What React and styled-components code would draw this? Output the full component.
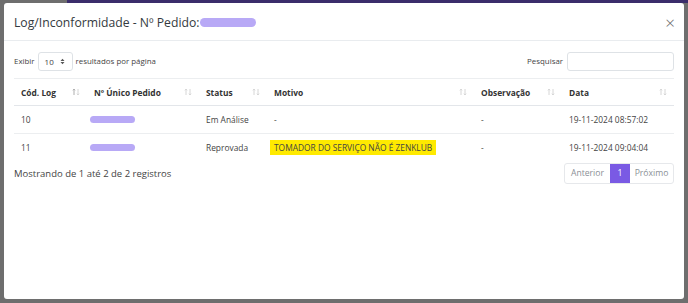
import React from "react";
import styled, { createGlobalStyle } from "styled-components";

const GlobalStyle = createGlobalStyle`
  html, body {
    margin: 0;
    padding: 0;
    height: 303px;
    overflow: hidden;
    background: #6e6e6e;
    font-family: "Open Sans", "Noto Sans", sans-serif;
  }
`;

const Backdrop = styled.div`
  width: 688px;
  height: 303px;
  display: flex;
  flex-direction: column;
  background: #6e6e6e;
`;

const TopStrip = styled.div`
  height: 3px;
  margin-left: 67px;
  background: #3b2d6b;
  flex-shrink: 0;
`;

const Modal = styled.div`
  margin: 0 4px;
  height: 296px;
  background: #fff;
  border-radius: 3px;
  display: flex;
  flex-direction: column;
`;

const Header = styled.div`
  height: 38px;
  border-bottom: 1px solid #e9ecef;
  display: flex;
  align-items: center;
  justify-content: space-between;
  padding: 2px 9px 0 10px;
  box-sizing: border-box;
`;

const Title = styled.h5`
  margin: 0;
  font-size: 12.2px;
  font-weight: 400;
  color: #343a40;
  display: flex;
  align-items: center;
`;

const Blur = styled.span`
  display: inline-block;
  width: ${(p) => p.$w}px;
  height: ${(p) => p.$h}px;
  border-radius: 5px;
  background: #b8a9f6;
  margin-left: ${(p) => p.$ml || 0}px;
`;

const Close = styled.span`
  font-size: 17px;
  font-weight: 300;
  color: #666;
  line-height: 1;
`;

const Body = styled.div`
  padding: 10px 10px 0 10px;
  display: flex;
  flex-direction: column;
`;

const Controls = styled.div`
  display: flex;
  justify-content: space-between;
  align-items: center;
  height: 20px;
  font-size: 7.9px;
  color: #444;
  margin-bottom: 7px;
`;

const Group = styled.label`
  display: flex;
  align-items: center;
  gap: ${(p) => p.$gap || 3}px;
`;

const SelectBox = styled.span`
  width: 35px;
  height: 19px;
  border: 1px solid #dee2e6;
  border-radius: 3px;
  box-sizing: border-box;
  display: flex;
  align-items: center;
  justify-content: space-between;
  padding: 0 7px 0 6px;
  font-size: 8px;
  color: #444;
`;

const SearchBox = styled.span`
  width: 107px;
  height: 19px;
  border: 1px solid #dee2e6;
  border-radius: 3px;
  box-sizing: border-box;
`;

const Table = styled.table`
  width: 660px;
  border-collapse: collapse;
  border-top: 1px solid #eceef0;
  font-size: 8.4px;
  color: #444;
`;

const Th = styled.th`
  width: ${(p) => p.$w}px;
  height: 27px;
  text-align: left;
  font-weight: 700;
  color: #333;
  padding: 0 7px;
  border-bottom: 1.5px solid #e3e6ea;
  box-sizing: border-box;
`;

const ThInner = styled.div`
  display: flex;
  align-items: center;
  justify-content: space-between;
`;

const Td = styled.td`
  height: 28px;
  padding: 0 7px;
  border-bottom: ${(p) => (p.$last ? "none" : "1px solid #eceef0")};
  box-sizing: border-box;
  white-space: nowrap;
`;

const Mark = styled.span`
  background: #ffea00;
  padding: 2px 4px;
  margin-left: -4px;
  color: #444;
`;

const Footer = styled.div`
  display: flex;
  justify-content: space-between;
  align-items: flex-start;
  font-size: 9.5px;
  color: #444;
`;

const Info = styled.span`
  margin-top: 5px;
`;

const Pager = styled.div`
  display: flex;
  border: 1px solid #e6e8eb;
  border-radius: 3px;
  height: 21px;
  margin-top: 1px;
  box-sizing: border-box;
`;

const PageBtn = styled.span`
  display: flex;
  align-items: center;
  justify-content: center;
  width: ${(p) => p.$w}px;
  background: ${(p) => (p.$active ? "#7a5ae4" : "transparent")};
  color: ${(p) => (p.$active ? "#fff" : "#8a8f96")};
  font-size: 8.6px;
`;

const SortIcon = ({ active }) => (
  <svg width="8" height="8" viewBox="0 0 8 8">
    <g strokeWidth="0.8" fill="none">
      <path d="M2 7V1.2M0.9 2.3L2 1.1L3.1 2.3" stroke={active ? "#999" : "#ccc"} />
      <path d="M6 1V6.8M4.9 5.7L6 6.9L7.1 5.7" stroke="#ccc" />
    </g>
  </svg>
);

const SelectArrows = () => (
  <svg width="5" height="7" viewBox="0 0 5 7">
    <path d="M0.5 3L2.5 0.8L4.5 3Z M0.5 4L2.5 6.2L4.5 4Z" fill="#555" />
  </svg>
);

const columns = [
  { label: "Cód. Log", w: 73, active: true },
  { label: "Nº Único Pedido", w: 112 },
  { label: "Status", w: 68 },
  { label: "Motivo", w: 207 },
  { label: "Observação", w: 88 },
  { label: "Data", w: 112 },
];

const rows = [
  { id: "10", status: "Em Análise", motivo: "-", obs: "-", data: "19-11-2024 08:57:02" },
  {
    id: "11",
    status: "Reprovada",
    motivo: "TOMADOR DO SERVIÇO NÃO É ZENKLUB",
    highlight: true,
    obs: "-",
    data: "19-11-2024 09:04:04",
  },
];

export default function App() {
  return (
    <Backdrop>
      <GlobalStyle />
      <TopStrip />
      <Modal>
        <Header>
          <Title>
            Log/Inconformidade - Nº Pedido:
            <Blur $w={56} $h={9} $ml={1} />
          </Title>
          <Close>×</Close>
        </Header>
        <Body>
          <Controls>
            <Group>
              Exibir
              <SelectBox>
                10
                <SelectArrows />
              </SelectBox>
              resultados por página
            </Group>
            <Group $gap={4}>
              Pesquisar
              <SearchBox />
            </Group>
          </Controls>
          <Table>
            <thead>
              <tr>
                {columns.map((c) => (
                  <Th key={c.label} $w={c.w}>
                    <ThInner>
                      {c.label}
                      <SortIcon active={c.active} />
                    </ThInner>
                  </Th>
                ))}
              </tr>
            </thead>
            <tbody>
              {rows.map((r, i) => {
                const last = i === rows.length - 1;
                return (
                  <tr key={r.id}>
                    <Td $last={last}>{r.id}</Td>
                    <Td $last={last}>
                      <Blur $w={45} $h={7} $ml={-4} />
                    </Td>
                    <Td $last={last}>{r.status}</Td>
                    <Td $last={last}>
                      {r.highlight ? <Mark>{r.motivo}</Mark> : r.motivo}
                    </Td>
                    <Td $last={last}>{r.obs}</Td>
                    <Td $last={last}>{r.data}</Td>
                  </tr>
                );
              })}
            </tbody>
          </Table>
          <Footer>
            <Info>Mostrando de 1 até 2 de 2 registros</Info>
            <Pager>
              <PageBtn $w={45}>Anterior</PageBtn>
              <PageBtn $w={20} $active>
                1
              </PageBtn>
              <PageBtn $w={43}>Próximo</PageBtn>
            </Pager>
          </Footer>
        </Body>
      </Modal>
    </Backdrop>
  );
}
